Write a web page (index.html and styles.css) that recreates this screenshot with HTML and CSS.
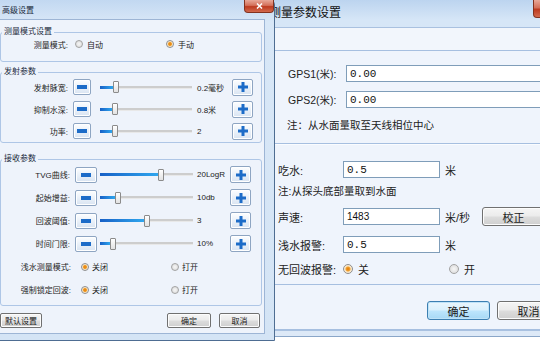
FILE: index.html
```html
<!DOCTYPE html>
<html lang="zh-CN">
<head>
    <meta charset="UTF-8">
    <meta name="viewport" content="width=device-width, initial-scale=1.0">
    <title>高级设置</title>
    <link rel="stylesheet" href="styles.css">
</head>
<body>
<div class="desktop">

    <!-- 测量参数设置 (window behind) -->
    <div class="window param-win">
        <div class="titlebar">
            <span class="title">测量参数设置</span>
            <span class="close-btn"><svg width="9" height="8" viewBox="0 0 9 8"><path d="M1.5 1l6 6M7.5 1l-6 6" stroke="#fff" stroke-width="1.8"/></svg></span>
        </div>
        <div class="client">
            <div class="strip"></div>

            <div class="panel gps-panel">
                <div class="field-row">
                    <span class="lbl">GPS1(米):</span>
                    <input type="text" class="tbox grow" value="0.00" readonly>
                </div>
                <div class="field-row">
                    <span class="lbl">GPS2(米):</span>
                    <input type="text" class="tbox grow" value="0.00" readonly>
                </div>
                <div class="note">注：从水面量取至天线相位中心</div>
            </div>

            <div class="panel sonar-panel">
                <div class="field-row r-draft">
                    <span class="lbl">吃水:</span>
                    <input type="text" class="tbox" value="0.5" readonly>
                    <span class="unit">米</span>
                </div>
                <div class="note n-draft">注:从探头底部量取到水面</div>
                <div class="field-row r-speed">
                    <span class="lbl">声速:</span>
                    <input type="text" class="tbox small-num" value="1483" readonly>
                    <span class="unit wide">米/秒</span>
                    <button class="btn big">校正</button>
                </div>
                <div class="field-row r-shallow">
                    <span class="lbl">浅水报警:</span>
                    <input type="text" class="tbox" value="0.5" readonly>
                    <span class="unit">米</span>
                </div>
                <div class="field-row r-echo">
                    <span class="lbl">无回波报警:</span>
                    <span class="opt first"><span class="radio on"></span>关</span>
                    <span class="opt"><span class="radio"></span>开</span>
                </div>
            </div>

            <div class="panel btn-panel">
                <button class="btn big focus">确定</button>
                <button class="btn big">取消</button>
            </div>
        </div>
    </div>

    <!-- 高级设置 (front window) -->
    <div class="window adv-win">
        <div class="titlebar">
            <span class="title">高级设置</span>
            <span class="close-btn"><svg width="7" height="6" viewBox="0 0 7 6"><path d="M1 .5l5 5M6 .5l-5 5" stroke="#fff" stroke-width="1.5"/></svg></span>
        </div>
        <div class="client">

            <div class="group g-mode">
                <span class="group-title">测量模式设置</span>
                <div class="radio-row">
                    <span class="lbl">测量模式:</span>
                    <span class="opt first"><span class="radio"></span>自动</span>
                    <span class="opt"><span class="radio on"></span>手动</span>
                </div>
            </div>

            <div class="group g-send">
                <span class="group-title">发射参数</span>
                <div class="slider-row">
                    <span class="lbl">发射脉宽:</span>
                    <span class="pm-btn minus"><svg width="10" height="4"><rect width="10" height="4" fill="#1d6cc8"/></svg></span>
                    <span class="slider"><span class="fill" style="width:13px"></span><span class="thumb"></span><span class="rest"></span></span>
                    <span class="val">0.2毫秒</span>
                    <span class="pm-btn plus"><svg width="10" height="10" viewBox="0 0 10 10"><path d="M3.5 0h3v3.5H10v3H6.5V10h-3V6.5H0v-3h3.5z" fill="#1d6cc8"/></svg></span>
                </div>
                <div class="slider-row">
                    <span class="lbl">抑制水深:</span>
                    <span class="pm-btn minus"><svg width="10" height="4"><rect width="10" height="4" fill="#1d6cc8"/></svg></span>
                    <span class="slider"><span class="fill" style="width:12px"></span><span class="thumb"></span><span class="rest"></span></span>
                    <span class="val">0.8米</span>
                    <span class="pm-btn plus"><svg width="10" height="10" viewBox="0 0 10 10"><path d="M3.5 0h3v3.5H10v3H6.5V10h-3V6.5H0v-3h3.5z" fill="#1d6cc8"/></svg></span>
                </div>
                <div class="slider-row">
                    <span class="lbl">功率:</span>
                    <span class="pm-btn minus"><svg width="10" height="4"><rect width="10" height="4" fill="#1d6cc8"/></svg></span>
                    <span class="slider"><span class="fill" style="width:12px"></span><span class="thumb"></span><span class="rest"></span></span>
                    <span class="val">2</span>
                    <span class="pm-btn plus"><svg width="10" height="10" viewBox="0 0 10 10"><path d="M3.5 0h3v3.5H10v3H6.5V10h-3V6.5H0v-3h3.5z" fill="#1d6cc8"/></svg></span>
                </div>
            </div>

            <div class="group g-recv">
                <span class="group-title">接收参数</span>
                <div class="slider-row">
                    <span class="lbl">TVG曲线:</span>
                    <span class="pm-btn minus"><svg width="10" height="4"><rect width="10" height="4" fill="#1d6cc8"/></svg></span>
                    <span class="slider"><span class="fill" style="width:58px"></span><span class="thumb"></span><span class="rest"></span></span>
                    <span class="val">20LogR</span>
                    <span class="pm-btn plus"><svg width="10" height="10" viewBox="0 0 10 10"><path d="M3.5 0h3v3.5H10v3H6.5V10h-3V6.5H0v-3h3.5z" fill="#1d6cc8"/></svg></span>
                </div>
                <div class="slider-row">
                    <span class="lbl">起始增益:</span>
                    <span class="pm-btn minus"><svg width="10" height="4"><rect width="10" height="4" fill="#1d6cc8"/></svg></span>
                    <span class="slider"><span class="fill" style="width:15px"></span><span class="thumb"></span><span class="rest"></span></span>
                    <span class="val">10db</span>
                    <span class="pm-btn plus"><svg width="10" height="10" viewBox="0 0 10 10"><path d="M3.5 0h3v3.5H10v3H6.5V10h-3V6.5H0v-3h3.5z" fill="#1d6cc8"/></svg></span>
                </div>
                <div class="slider-row">
                    <span class="lbl">回波阈值:</span>
                    <span class="pm-btn minus"><svg width="10" height="4"><rect width="10" height="4" fill="#1d6cc8"/></svg></span>
                    <span class="slider"><span class="fill" style="width:44px"></span><span class="thumb"></span><span class="rest"></span></span>
                    <span class="val">3</span>
                    <span class="pm-btn plus"><svg width="10" height="10" viewBox="0 0 10 10"><path d="M3.5 0h3v3.5H10v3H6.5V10h-3V6.5H0v-3h3.5z" fill="#1d6cc8"/></svg></span>
                </div>
                <div class="slider-row">
                    <span class="lbl">时间门限:</span>
                    <span class="pm-btn minus"><svg width="10" height="4"><rect width="10" height="4" fill="#1d6cc8"/></svg></span>
                    <span class="slider"><span class="fill" style="width:10px"></span><span class="thumb"></span><span class="rest"></span></span>
                    <span class="val">10%</span>
                    <span class="pm-btn plus"><svg width="10" height="10" viewBox="0 0 10 10"><path d="M3.5 0h3v3.5H10v3H6.5V10h-3V6.5H0v-3h3.5z" fill="#1d6cc8"/></svg></span>
                </div>
                <div class="radio-row">
                    <span class="lbl">浅水测量模式:</span>
                    <span class="opt first"><span class="radio on"></span>关闭</span>
                    <span class="opt"><span class="radio"></span>打开</span>
                </div>
                <div class="radio-row">
                    <span class="lbl">强制锁定回波:</span>
                    <span class="opt first"><span class="radio on"></span>关闭</span>
                    <span class="opt"><span class="radio"></span>打开</span>
                </div>
            </div>

            <div class="btn-row">
                <button class="btn b-default">默认设置</button>
                <button class="btn b-ok">确定</button>
                <button class="btn b-cancel">取消</button>
            </div>
        </div>
    </div>

</div>
</body>
</html>
```

FILE: styles.css
```css
* {
    box-sizing: border-box;
}
body {
    margin: 0;
    font-family: "Liberation Sans", "Noto Sans CJK SC", sans-serif;
    color: #222;
    background: #fff;
}
.desktop {
    position: relative;
    width: 540px;
    height: 342px;
    overflow: hidden;
    background: #fff;
}

/* Windows */
.window {
    position: absolute;
    display: flex;
    flex-direction: column;
    border: 1px solid #6384aa;
    border-radius: 6px 6px 0 0;
    background: linear-gradient(180deg, #c2d8f1 0, #d8e7f7 22px, #d4e4f5 100%);
}
.adv-win {
    left: -14px;
    top: -1px;
    width: 289px;
    height: 342px;
    z-index: 2;
    font-size: 8px;
    border-color: #4e6d92;
}
.param-win {
    left: 262px;
    top: -1px;
    width: 316px;
    height: 338px;
    font-size: 11px;
    border-color: #8aa6c8;
    background: linear-gradient(180deg, #bcd4ef 0, #d6e6f7 20px, #dde9f7 100%);
}
.titlebar {
    display: flex;
    align-items: flex-start;
    flex: none;
}
.adv-win .titlebar {
    height: 19px;
}
.adv-win .title {
    padding: 6px 0 0 15px;
    line-height: 9px;
    color: #1b2a3c;
}
.param-win .titlebar {
    height: 27px;
}
.param-win .title {
    padding: 6px 0 0 6px;
    line-height: 14px;
    font-size: 12px;
    color: #111;
}
.close-btn {
    margin-left: auto;
    display: flex;
    align-items: center;
    justify-content: center;
    border: 1px solid #83321f;
    border-top: none;
    border-radius: 0 0 4px 4px;
    background: linear-gradient(180deg, #e8a898 0, #d4705a 45%, #bd3a1f 55%, #d26a4e 100%);
}
.adv-win .close-btn {
    width: 30px;
    height: 13px;
}
.param-win .close-btn {
    width: 43px;
    height: 18px;
    margin-right: 1px;
}

/* Client areas */
.client {
    flex: 1;
    display: flex;
    flex-direction: column;
    background: #eef3fb;
    border: 1px solid #9db5d5;
}
.adv-win .client {
    margin: 0 9px 6px 7px;
    padding: 12px 2px 0 5px;
}
.param-win .client {
    margin: 0 8px 5px 8px;
    padding: 0 0 0 6px;
    background: #eff4fc;
    border-color: #a9c1e0;
}

/* Group boxes */
.group {
    border: 1px solid #aec6e6;
    border-radius: 3px;
}
.group-title {
    display: block;
    width: max-content;
    margin: -7px 0 -2px 1px;
    padding: 0 2px;
    line-height: 12px;
    background: #eef3fb;
    color: #1b2a3c;
}
.g-mode {
    padding-bottom: 9px;
}
.g-send {
    margin-top: 10px;
}
.g-recv {
    margin-top: 16px;
    padding-bottom: 4px;
}

/* Rows of the advanced dialog */
.lbl {
    flex: none;
    text-align: right;
    white-space: nowrap;
}
.slider-row {
    display: flex;
    align-items: center;
    height: 22px;
}
.g-recv .slider-row,
.g-recv .radio-row {
    height: 23px;
}
.slider-row .lbl {
    width: 67px;
}
.pm-btn {
    display: flex;
    align-items: center;
    justify-content: center;
    flex: none;
    height: 16px;
    border: 1px solid #8ea5c2;
    border-radius: 2px;
    background: linear-gradient(180deg, #fdfeff 0, #eaf1f9 50%, #d9e4f2 100%);
    box-shadow: inset 0 0 0 1px #fff;
}
.pm-btn.minus {
    width: 18px;
    margin-left: 5px;
}
.pm-btn.plus {
    width: 21px;
    height: 17px;
}
.slider {
    display: flex;
    align-items: center;
    flex: none;
    width: 92px;
    height: 14px;
    margin-left: 9px;
}
.fill {
    height: 3px;
    background: linear-gradient(90deg, #1760c6, #2fa6ee);
}
.thumb {
    flex: none;
    width: 6px;
    height: 12px;
    border: 1px solid #8b8b8b;
    border-radius: 1px;
    background: linear-gradient(180deg, #ffffff, #e2e2e2);
}
.rest {
    flex: 1;
    height: 3px;
    background: #cdcdcd;
    border-bottom: 1px solid #e8e8e8;
}
.val {
    flex: none;
    width: 35px;
    margin-left: 5px;
    white-space: nowrap;
}
.g-recv .slider-row .lbl {
    width: 69px;
}
.g-recv .pm-btn.minus {
    width: 22px;
}
.g-recv .slider {
    width: 93px;
    margin-left: 3px;
}
.g-recv .val {
    width: 33px;
    margin-left: 4px;
}

.radio-row {
    display: flex;
    align-items: center;
    height: 16px;
}
.radio-row .lbl {
    width: 67px;
}
.opt {
    display: flex;
    align-items: center;
    gap: 4px;
    flex: none;
}
.radio-row .opt.first {
    width: 91px;
    margin-left: 7px;
}
.g-recv .radio-row .lbl {
    width: 70px;
}
.g-recv .radio-row .opt {
    gap: 3px;
}
.g-recv .radio-row .opt.first {
    width: 90px;
    margin-left: 10px;
}
.radio {
    flex: none;
    width: 8px;
    height: 8px;
    border-radius: 50%;
    border: 1px solid #a2a2a2;
    background: radial-gradient(circle, #f6f6f6 0, #d8d8d8 100%);
}
.radio.on {
    border-color: #8e8e8e;
    background: radial-gradient(circle, #e27a06 0, #f0a030 1.6px, #fbe6c4 2.4px, #f4f4f4 100%);
}

/* Buttons */
.btn {
    display: flex;
    align-items: center;
    justify-content: center;
    padding: 0;
    font: inherit;
    color: #1a1a1a;
    border: 1px solid #707070;
    border-radius: 2px;
    background: linear-gradient(180deg, #f5f5f5 0, #ebebeb 49%, #dddddd 51%, #cfcfcf 100%);
    box-shadow: inset 0 0 0 1px #fcfcfc;
}
.btn-row {
    display: flex;
    margin-top: 7px;
    padding-right: 2px;
}
.btn-row .btn {
    height: 15px;
}
.b-default {
    width: 42px;
}
.b-ok {
    width: 44px;
    margin-left: auto;
}
.b-cancel {
    width: 41px;
    margin-left: 8px;
}

/* Measurement parameter dialog */
.strip {
    flex: none;
    height: 23px;
    margin-left: -6px;
    border-bottom: 1px solid #a6bfe0;
    background: #f2f6fc;
}
.panel {
    display: flex;
    flex-direction: column;
    flex: none;
    margin-left: -6px;
    padding-left: 6px;
    border-bottom: 1px solid #a6bfe0;
}
.gps-panel {
    padding: 14px 8px 11px 16px;
}
.field-row {
    display: flex;
    align-items: center;
}
.gps-panel .field-row {
    height: 17px;
}
.gps-panel .field-row + .field-row {
    margin-top: 9px;
}
.gps-panel .lbl {
    width: 58px;
    text-align: left;
    font-size: 10.5px;
}
.note {
    font-size: 10.5px;
    line-height: 14px;
    white-space: nowrap;
}
.gps-panel .note {
    margin: 10px 0 0 -1px;
}
.tbox {
    flex: none;
    width: 97px;
    height: 17px;
    padding: 0 3px;
    border: 1px solid #7f9db9;
    background: #fff;
    font-family: "Liberation Mono", "DejaVu Sans Mono", monospace;
    font-size: 11px;
    color: #111;
    outline: none;
}
.tbox.grow {
    flex: 1;
    width: auto;
}
.tbox.small-num {
    font-family: "Liberation Sans", sans-serif;
    font-size: 10px;
}
.sonar-panel {
    padding-bottom: 8px;
    border-top: 1px solid #fafcff;
}
.sonar-panel .lbl {
    width: 65px;
    text-align: left;
}
.unit {
    flex: none;
    margin-left: 5px;
}
.unit.wide {
    width: 37px;
}
.r-draft {
    margin-top: 16px;
}
.n-draft {
    margin-top: 6px;
}
.r-speed {
    margin-top: 9px;
    height: 19px;
}
.r-shallow {
    margin-top: 10px;
}
.r-echo {
    margin-top: 9px;
    height: 14px;
}
.r-echo .opt {
    gap: 5px;
}
.r-echo .opt.first {
    width: 106px;
}
.r-echo .radio {
    width: 10px;
    height: 10px;
}
.r-echo .radio.on {
    background: radial-gradient(circle, #e27a06 0, #f0a030 2px, #fbe6c4 3px, #f4f4f4 100%);
}
.btn.big {
    flex: none;
    width: 63px;
    height: 19px;
    border-radius: 3px;
    font-size: 11px;
}
.btn-panel {
    flex: 1;
    flex-direction: row;
    justify-content: flex-end;
    align-items: flex-start;
    gap: 7px;
    padding: 16px 8px 0 0;
}
.btn.focus {
    border-color: #3c7fb1;
    box-shadow: inset 0 0 0 1px #bfe3f8;
    background: linear-gradient(180deg, #eaf6fd 0, #d9f0fc 49%, #bee6fd 51%, #a7d9f5 100%);
}
```
